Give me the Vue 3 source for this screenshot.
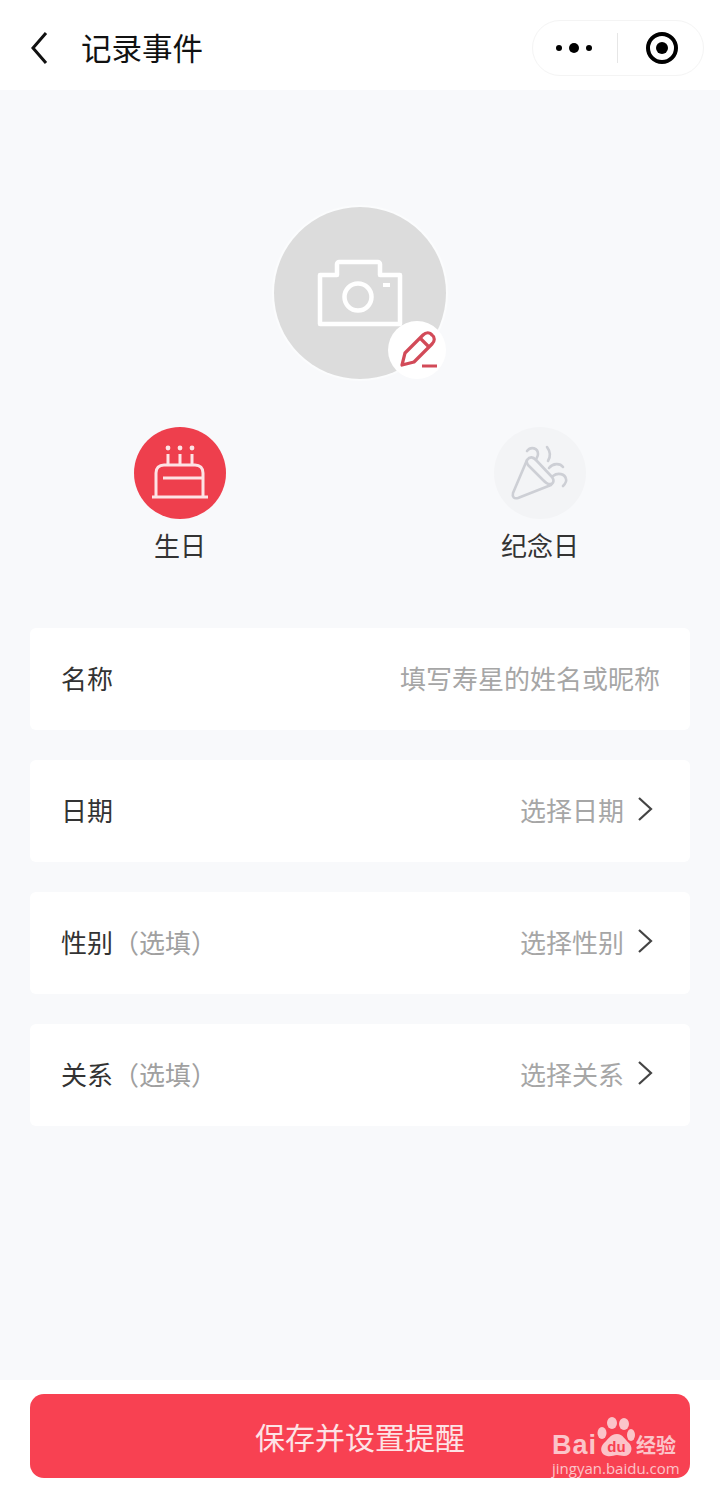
<template>
  <div class="page">
    <div class="nav">
      <svg class="back" viewBox="0 0 24 36" width="24" height="36">
        <path d="M19 3 L6 18 L19 33" fill="none" stroke="#111" stroke-width="3" />
      </svg>
      <div class="nav-title">记录事件</div>
      <div class="capsule">
        <svg viewBox="0 0 40 16" width="40" height="16">
          <circle cx="5" cy="8" r="3" fill="#000" />
          <circle cx="20" cy="8" r="5" fill="#000" />
          <circle cx="35" cy="8" r="3" fill="#000" />
        </svg>
        <div class="capsule-line"></div>
        <svg viewBox="0 0 34 34" width="34" height="34">
          <circle cx="17" cy="17" r="14" fill="none" stroke="#000" stroke-width="4" />
          <circle cx="17" cy="17" r="6" fill="#000" />
        </svg>
      </div>
    </div>

    <div class="avatar-wrap">
      <div class="avatar">
        <svg viewBox="0 0 86 68" width="86" height="68">
          <path d="M3 16 H20 V5 C20 4 21 3 22 3 H61 C62 3 63 4 63 5 V16 H83 V65 H3 Z" fill="none" stroke="#fff" stroke-width="4.5" stroke-linejoin="round" />
          <circle cx="41" cy="38" r="13.5" fill="none" stroke="#fff" stroke-width="4.5" />
          <rect x="66" y="24" width="7" height="4" fill="#fff" />
        </svg>
        <div class="edit-badge">
          <svg viewBox="0 0 44 44" width="44" height="44">
            <g fill="none" stroke="#d24a58" stroke-width="3.2" transform="translate(2 1)">
              <path d="M5 36 L8 24 L26 6 C29 3 33 3 35 6 C38 8 38 12 35 15 L17 33 Z" stroke-linejoin="round" />
              <path d="M23 9 L32 18" />
            </g>
            <path d="M27 38 H42" fill="none" stroke="#d24a58" stroke-width="3" />
          </svg>
        </div>
      </div>
    </div>

    <div class="types">
      <div class="type">
        <div class="type-icon active">
          <svg viewBox="0 0 60 60" width="60" height="60">
            <g fill="none" stroke="#fde3e5" stroke-width="3">
              <path d="M2 54 H58" />
              <path d="M6 54 V30 C6 25 9 22 14 22 H45 C50 22 53 25 53 30 V54" />
              <path d="M13 35 H53" />
              <path d="M18 22 V11 M30 22 V11 M42 22 V11" />
            </g>
            <circle cx="18" cy="5" r="2.4" fill="#fde3e5" />
            <circle cx="30" cy="5" r="2.4" fill="#fde3e5" />
            <circle cx="42" cy="5" r="2.4" fill="#fde3e5" />
          </svg>
        </div>
        <div class="type-label">生日</div>
      </div>
      <div class="type">
        <div class="type-icon muted">
          <svg viewBox="0 0 60 60" width="60" height="60">
            <g fill="none" stroke="#cdcfd5" stroke-width="2.6" stroke-linecap="round" stroke-linejoin="round" transform="translate(1 3)">
              <path d="M16 14 L2 47 C1 51 3 53 7 52 L40 39" />
              <path d="M16 14 C19 10 22 11 25 14 L41 31 C44 35 42 39 38 38 C36 38 34 36 32 34 L17 19 C16 17 15 16 16 14 Z" />
              <path d="M16 5 C20 0 27 2 27 8 C27 11 25 12 25 14" />
              <path d="M36 1 C39 5 40 10 37 15" />
              <path d="M38 22 C42 17 49 17 52 21" />
              <path d="M42 30 C47 26 54 28 55 33 C56 36 54 38 52 40" />
            </g>
          </svg>
        </div>
        <div class="type-label">纪念日</div>
      </div>
    </div>

    <div class="form">
      <div v-for="row in rows" :key="row.label" class="row">
        <div class="row-label">{{ row.label }}<span v-if="row.optional" class="optional">（选填）</span></div>
        <div class="row-value">
          <span>{{ row.value }}</span>
          <svg v-if="row.arrow" class="arrow" viewBox="0 0 16 26" width="16" height="26">
            <path d="M2 2 L14 13 L2 24" fill="none" stroke="#444" stroke-width="2.2" />
          </svg>
        </div>
      </div>
    </div>

    <div class="footer">
      <div class="save-btn">保存并设置提醒</div>
    </div>

    <div class="watermark">
      <div class="wm-top">
        <span class="wm-bai">Bai</span>
        <svg class="wm-paw" viewBox="0 0 38 40" width="38" height="40">
          <ellipse cx="15" cy="6" rx="5" ry="6" />
          <ellipse cx="27" cy="7" rx="5" ry="6" />
          <ellipse cx="5" cy="16" rx="4.5" ry="6" />
          <ellipse cx="34" cy="18" rx="4" ry="6" />
          <path d="M20 17 C26 17 28 23 32 26 C37 31 34 39 27 39 C24 39 22 38 20 38 C17 38 14 40 10 39 C4 38 2 31 7 26 C11 23 13 17 20 17 Z" />
          <text x="19.5" y="35" text-anchor="middle" class="wm-du">du</text>
        </svg>
        <span class="wm-cn">经验</span>
      </div>
      <div class="wm-url">jingyan.baidu.com</div>
    </div>
  </div>
</template>

<script setup>
const rows = [
  { label: '名称', value: '填写寿星的姓名或昵称', optional: false, arrow: false },
  { label: '日期', value: '选择日期', optional: false, arrow: true },
  { label: '性别', value: '选择性别', optional: true, arrow: true },
  { label: '关系', value: '选择关系', optional: true, arrow: true }
]
</script>

<style>
html, body {
  margin: 0;
  background: #f8f9fb;
}
</style>

<style scoped>
.page {
  position: relative;
  width: 720px;
  height: 1493px;
  display: flex;
  flex-direction: column;
  overflow: hidden;
  background: #f8f9fb;
  font-family: "Noto Sans CJK SC", "Noto Sans", sans-serif;
  color: #333;
}

/* nav */
.nav {
  height: 90px;
  flex-shrink: 0;
  display: flex;
  align-items: center;
  padding: 0 16px 0 27px;
  box-sizing: border-box;
  background: #fff;
}

.back {
  margin-top: 6px;
}

.nav-title {
  margin-left: 30px;
  margin-top: 3px;
  font-size: 30.5px;
  color: #111;
}

.capsule {
  margin-left: auto;
  margin-top: 6px;
  width: 172px;
  height: 56px;
  box-sizing: border-box;
  padding: 0 24px 0 21px;
  display: flex;
  align-items: center;
  justify-content: space-between;
  border: 1px solid #f4f4f4;
  border-radius: 28px;
}

.capsule-line {
  width: 1px;
  height: 30px;
  margin-right: 5px;
  background: #e6e6e6;
}

/* avatar */
.avatar-wrap {
  display: flex;
  justify-content: center;
  padding-top: 117px;
}

.avatar {
  position: relative;
  width: 172px;
  height: 172px;
  border-radius: 50%;
  background: #dcdcdc;
  box-shadow: 0 0 0 2px #fbfcfd;
  display: flex;
  align-items: center;
  justify-content: center;
}

.edit-badge {
  position: absolute;
  left: 114px;
  top: 114px;
  width: 58px;
  height: 58px;
  border-radius: 50%;
  background: #fff;
  display: flex;
  align-items: center;
  justify-content: center;
}

/* type */
.types {
  margin-top: 48px;
  display: flex;
}

.type {
  width: 360px;
  display: flex;
  flex-direction: column;
  align-items: center;
}

.type-icon {
  width: 92px;
  height: 92px;
  border-radius: 50%;
  display: flex;
  align-items: center;
  justify-content: center;
}

.type-icon.active {
  background: #ee3f4d;
}

.type-icon.muted {
  background: #f3f4f6;
}

.type-label {
  margin-top: 7px;
  font-size: 26px;
  line-height: 38px;
  color: #333;
}

/* form */
.form {
  margin-top: 64px;
  padding: 0 30px;
  display: flex;
  flex-direction: column;
  gap: 30px;
}

.row {
  height: 102px;
  box-sizing: border-box;
  padding: 0 37px 4px 31px;
  display: flex;
  align-items: center;
  justify-content: space-between;
  background: #fff;
  border-radius: 6px;
  font-size: 26px;
}

.row-label {
  color: #333;
}

.optional {
  color: #a0a0a0;
}

.row-value {
  display: flex;
  align-items: center;
  color: #a6a6a6;
}

.row:first-child .row-value {
  margin-right: -7px;
}

.arrow {
  margin-left: 13px;
}

/* footer */
.footer {
  margin-top: auto;
  height: 113px;
  box-sizing: border-box;
  padding: 14px 30px 0;
  background: #fff;
}

.save-btn {
  height: 84px;
  line-height: 84px;
  text-align: center;
  border-radius: 14px;
  background: #f84152;
  color: #fde3e5;
  font-size: 30px;
}

/* watermark */
.watermark {
  position: absolute;
  left: 552px;
  top: 1416px;
  width: 130px;
  color: #fbc4c9;
}

.wm-top {
  display: flex;
  align-items: flex-end;
  height: 44px;
}

.wm-bai {
  font-family: "Liberation Sans", sans-serif;
  font-weight: 700;
  font-size: 27px;
  line-height: 30px;
  letter-spacing: 1px;
}

.wm-paw {
  align-self: flex-start;
  margin-top: 1px;
  fill: #fbc4c9;
}

.wm-du {
  font-family: "Liberation Sans", sans-serif;
  font-size: 15px;
  font-weight: 700;
  fill: #f84152;
}

.wm-cn {
  font-size: 20px;
  line-height: 30px;
  font-weight: 700;
  margin-left: 1px;
  white-space: nowrap;
}

.wm-url {
  margin-top: -1px;
  font-family: "Open Sans", sans-serif;
  font-size: 15px;
  line-height: 18px;
  white-space: nowrap;
}
</style>
